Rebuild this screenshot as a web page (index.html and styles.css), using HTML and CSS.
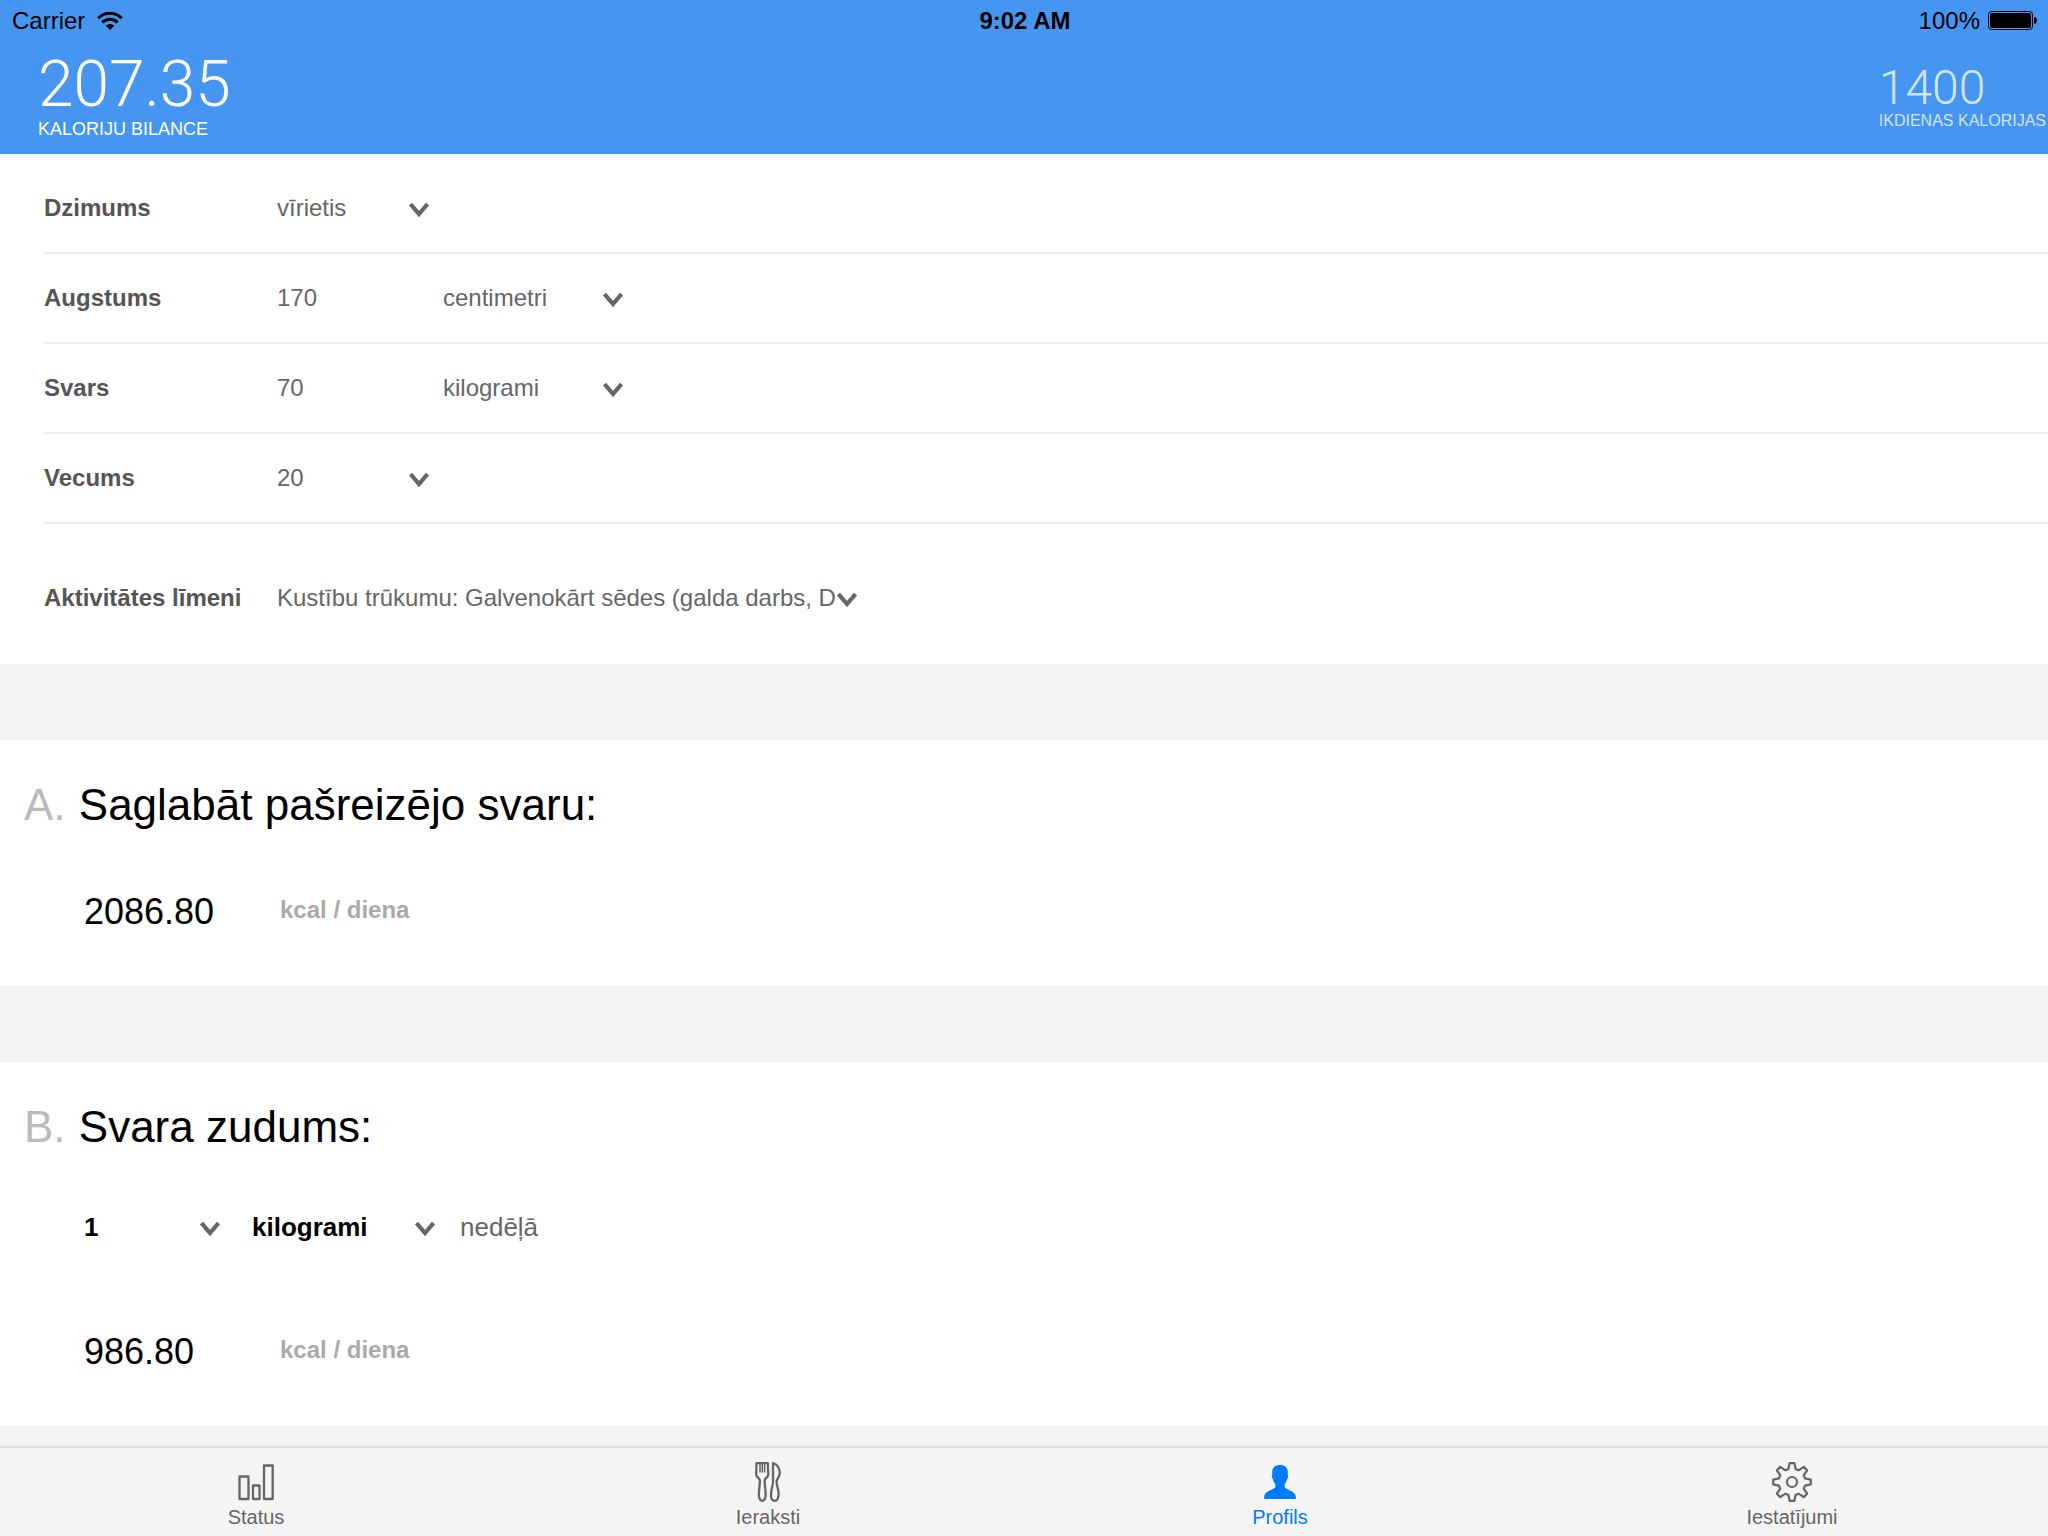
FILE: index.html
```html
<!DOCTYPE html>
<html lang="lv">
<head>
  <meta charset="utf-8">
  <meta name="viewport" content="width=device-width, initial-scale=1">
  <title>Profils</title>
  <link rel="stylesheet" href="styles.css">
</head>
<body>
  <svg class="sprite" aria-hidden="true">
    <symbol id="chevron" viewBox="0 0 20 18">
      <path d="M1.500 5 L10 15 L18.500 5" fill="none" stroke="#666" stroke-width="4.200"/>
    </symbol>
  </svg>

  <header class="header">
    <div class="statusbar">
      <div class="statusbar-left">
        <span>Carrier</span>
        <svg width="26" height="18" viewBox="0 0 26 18" aria-hidden="true">
          <g fill="none" stroke="#000" stroke-width="3">
            <path d="M1.300 6.200 A16.500 16.500 0 0 1 24.700 6.200"/>
            <path d="M5.300 10.400 A10.800 10.800 0 0 1 20.700 10.400"/>
          </g>
          <path d="M8.700 13.700 A6 6 0 0 1 17.300 13.700 L13 18 Z" fill="#000"/>
        </svg>
      </div>
      <time class="statusbar-time">9:02 AM</time>
      <div class="statusbar-right">
        <span>100%</span>
        <svg width="50" height="20" viewBox="0 0 50 20" aria-hidden="true">
          <rect x="0.500" y="0.500" width="44" height="18" rx="3" fill="none" stroke="#000"/>
          <rect x="2" y="2" width="41" height="15" rx="2" fill="#000"/>
          <path d="M46 6 C50 6.500 50 12.500 46 13 Z" fill="#000"/>
        </svg>
      </div>
    </div>
    <div class="summary">
      <div class="balance">
        <div class="balance-value">207.35</div>
        <div class="balance-label">KALORIJU BILANCE</div>
      </div>
      <div class="daily">
        <div class="daily-value">1400</div>
        <div class="daily-label">IKDIENAS KALORIJAS</div>
      </div>
    </div>
  </header>

  <main class="content">
    <form class="profile">
      <div class="row">
        <label class="row-label" for="gender">Dzimums</label>
        <div class="picker picker-short">
          <select id="gender"><option>vīrietis</option></select>
          <svg class="chevron" aria-hidden="true"><use href="#chevron"/></svg>
        </div>
      </div>
      <div class="row">
        <label class="row-label" for="height">Augstums</label>
        <input class="number" id="height" type="text" inputmode="numeric" value="170">
        <div class="picker picker-unit">
          <select aria-labelledby="height"><option>centimetri</option></select>
          <svg class="chevron" aria-hidden="true"><use href="#chevron"/></svg>
        </div>
      </div>
      <div class="row">
        <label class="row-label" for="weight">Svars</label>
        <input class="number" id="weight" type="text" inputmode="numeric" value="70">
        <div class="picker picker-unit">
          <select aria-labelledby="weight"><option>kilogrami</option></select>
          <svg class="chevron" aria-hidden="true"><use href="#chevron"/></svg>
        </div>
      </div>
      <div class="row">
        <label class="row-label" for="age">Vecums</label>
        <div class="picker picker-short">
          <select id="age"><option>20</option></select>
          <svg class="chevron" aria-hidden="true"><use href="#chevron"/></svg>
        </div>
      </div>
      <div class="row row-activity">
        <label class="row-label" for="activity">Aktivitātes līmeni</label>
        <div class="picker picker-long">
          <select id="activity"><option>Kustību trūkumu: Galvenokārt sēdes (galda darbs, D</option></select>
          <svg class="chevron" aria-hidden="true"><use href="#chevron"/></svg>
        </div>
      </div>
    </form>

    <section class="card">
      <h2 class="card-title"><span class="card-letter">A.</span> Saglabāt pašreizējo svaru:</h2>
      <div class="result">
        <span class="result-value">2086.80</span>
        <span class="result-unit">kcal / diena</span>
      </div>
    </section>

    <section class="card">
      <h2 class="card-title" id="loss"><span class="card-letter">B.</span> Svara zudums:</h2>
      <div class="goal">
        <div class="picker picker-amount">
          <select aria-labelledby="loss"><option>1</option></select>
          <svg class="chevron" aria-hidden="true"><use href="#chevron"/></svg>
        </div>
        <div class="picker picker-mass">
          <select aria-labelledby="loss"><option>kilogrami</option></select>
          <svg class="chevron" aria-hidden="true"><use href="#chevron"/></svg>
        </div>
        <span class="goal-period">nedēļā</span>
      </div>
      <div class="result result-goal">
        <span class="result-value">986.80</span>
        <span class="result-unit">kcal / diena</span>
      </div>
    </section>
  </main>

  <nav class="tabbar">
    <a class="tab" href="#status">
      <svg width="36" height="40" viewBox="0 0 36 40" fill="none" stroke="#666" stroke-width="2.300" stroke-linejoin="round" aria-hidden="true">
        <rect x="1.500" y="14.500" width="9" height="22.500"/>
        <rect x="15" y="23.500" width="6.500" height="13.500"/>
        <rect x="26" y="3.500" width="8.700" height="33.500"/>
      </svg>
      <span>Status</span>
    </a>
    <a class="tab" href="#ieraksti">
      <svg width="26" height="40" viewBox="0 0 26 40" fill="none" stroke="#666" stroke-width="2.300" stroke-linejoin="round" aria-hidden="true">
        <path d="M1.500 1.200 H12.800 L13.300 12.500 C13.300 15.500 9.800 15.500 9.600 18.500 C9.600 24 10.800 28 10.600 33 C10.400 37 9 38.800 7.200 38.800 C5.400 38.800 4.100 37 3.900 33 C3.700 28 4.900 24 4.900 18.500 C4.700 15.500 1.200 15.500 1.200 12.500 Z"/>
        <path d="M5 1 V10.500 M7.300 1 V10.500 M9.600 1 V10.500" stroke-width="1.500"/>
        <path d="M18 1.200 C22.500 2 24.800 7 24.800 11 C24.800 15 21.500 17.500 21.500 19.500 C21.500 23 23.600 27 23.600 32 C23.600 37 21.500 38.800 19.500 38.800 C17.500 38.800 16 37 16 32.500 C16 27 18 24 18 19.500 Z"/>
      </svg>
      <span>Ieraksti</span>
    </a>
    <a class="tab tab-active" href="#profils" aria-current="page">
      <svg width="32" height="40" viewBox="0 0 32 40" fill="#007aff" aria-hidden="true">
        <path d="M16 3 C20.500 3 23.800 5.500 23.800 10 L23.600 12.500 C24.600 13 24.200 16.500 23 17.200 C22.600 19.500 21.500 21 20.700 22 V25 C21.200 28 31 28 31.800 34.500 V37 H0.200 V34.500 C1 28 10.800 28 11.300 25 V22 C10.500 21 9.400 19.500 9 17.200 C7.800 16.500 7.400 13 8.400 12.500 L8.200 10 C8.200 5.500 11.500 3 16 3 Z"/>
      </svg>
      <span>Profils</span>
    </a>
    <a class="tab" href="#iestatijumi">
      <svg width="40" height="40" viewBox="0 0 40 40" fill="none" stroke="#666" stroke-width="2.200" stroke-linejoin="round" aria-hidden="true">
        <path d="M16.400 7 L17.600 1.200 H22.400 L23.600 7 L26.600 8.300 L31.700 4.900 L35.100 8.300 L31.700 13.400 L33 16.400 L38.800 17.600 V22.400 L33 23.600 L31.700 26.600 L35.100 31.700 L31.700 35.100 L26.600 31.700 L23.600 33 L22.400 38.800 H17.600 L16.400 33 L13.400 31.700 L8.300 35.100 L4.900 31.700 L8.300 26.600 L7 23.600 L1.200 22.400 V17.600 L7 16.400 L8.300 13.400 L4.900 8.300 L8.300 4.900 L13.400 8.300 Z"/>
        <circle cx="20" cy="20" r="5"/>
      </svg>
      <span>Iestatījumi</span>
    </a>
  </nav>
</body>
</html>
```
FILE: styles.css
```css
* {
  box-sizing: border-box;
}

body {
  display: flex;
  flex-direction: column;
  min-height: 100vh;
  margin: 0;
  background: #f2f3f5;
  color: #000;
  font-family: "Liberation Sans", Arial, sans-serif;
  font-size: 24px;
}

.sprite {
  display: none;
}

/* Header */

.header {
  background: #4696f1;
}

.statusbar {
  display: grid;
  grid-template-columns: 1fr auto 1fr;
  align-items: center;
  padding: 0 10px 0 12px;
  line-height: 42px;
}

.statusbar-left,
.statusbar-right {
  display: flex;
  align-items: center;
  gap: 12px;
}

.statusbar-right {
  justify-content: flex-end;
  gap: 8px;
}

.statusbar-time {
  font-weight: bold;
}

.summary {
  display: flex;
  justify-content: space-between;
  align-items: center;
  padding: 12px 2px 12px 38px;
  color: #fff;
}

.balance-value,
.daily-value {
  font-family: Roboto, "Liberation Sans", sans-serif;
  font-weight: 300;
}

.balance-value {
  font-size: 64px;
  line-height: 62px;
}

.balance-label {
  font-size: 18px;
  line-height: 26px;
}

.daily {
  color: #d0e4fb;
}

.daily-value {
  font-size: 48px;
  line-height: 46px;
}

.daily-label {
  font-size: 16px;
  line-height: 20px;
}

/* Form controls */

select,
input {
  width: 100%;
  margin: 0;
  padding: 0;
  border: 0;
  border-radius: 0;
  outline: 0;
  background: transparent;
  color: inherit;
  font: inherit;
  appearance: none;
}

.picker {
  display: grid;
  align-items: center;
}

.picker select,
.picker .chevron {
  grid-area: 1 / 1;
}

.chevron {
  width: 20px;
  height: 18px;
  justify-self: end;
  pointer-events: none;
}

/* Profile form */

.profile {
  padding: 10px 0 0 44px;
  background: #fff;
}

.row {
  display: flex;
  align-items: center;
  min-height: 90px;
  border-bottom: 2px solid #ececec;
  color: #666;
  line-height: 28px;
}

.row-label {
  flex: none;
  width: 233px;
  color: #555;
  font-weight: bold;
}

.row-activity {
  min-height: 140px;
  padding-top: 8px;
  border-bottom: 0;
}

.number {
  width: 166px;
}

.picker-short {
  width: 152px;
}

.picker-unit {
  width: 180px;
}

.picker-long {
  width: 580px;
}

/* Result cards */

.card {
  margin-top: 76px;
  padding: 40px 24px 52px;
  background: #fff;
}

.card-title {
  margin: 0;
  font-size: 44px;
  font-weight: normal;
  line-height: 50px;
}

.card-letter {
  margin-right: 1px;
  color: #bbb;
}

.result {
  display: grid;
  grid-template-columns: 196px 1fr;
  margin-top: 60px;
  padding-left: 60px;
}

.result-value {
  font-size: 36px;
  line-height: 44px;
}

.result-unit {
  color: #aaa;
  font-weight: bold;
  line-height: 40px;
}

.result-goal {
  margin-top: 82px;
}

.goal {
  display: flex;
  align-items: center;
  margin-top: 54px;
  padding-left: 60px;
  font-size: 26px;
  line-height: 42px;
}

.picker-amount,
.picker-mass {
  font-weight: bold;
}

.picker-amount {
  width: 136px;
  margin-right: 32px;
}

.picker-mass {
  width: 183px;
  margin-right: 25px;
}

.goal-period {
  color: #666;
}

/* Tab bar */

.tabbar {
  position: sticky;
  bottom: 0;
  display: grid;
  grid-template-columns: repeat(4, 1fr);
  margin-top: auto;
  border-top: 2px solid #dcdcdc;
  background: #f4f4f4;
}

.tab {
  display: flex;
  flex-direction: column;
  align-items: center;
  gap: 2px;
  padding: 14px 0 6px;
  color: #666;
  font-size: 20px;
  line-height: 26px;
  text-decoration: none;
}

.tab-active {
  color: #007aff;
}
```
